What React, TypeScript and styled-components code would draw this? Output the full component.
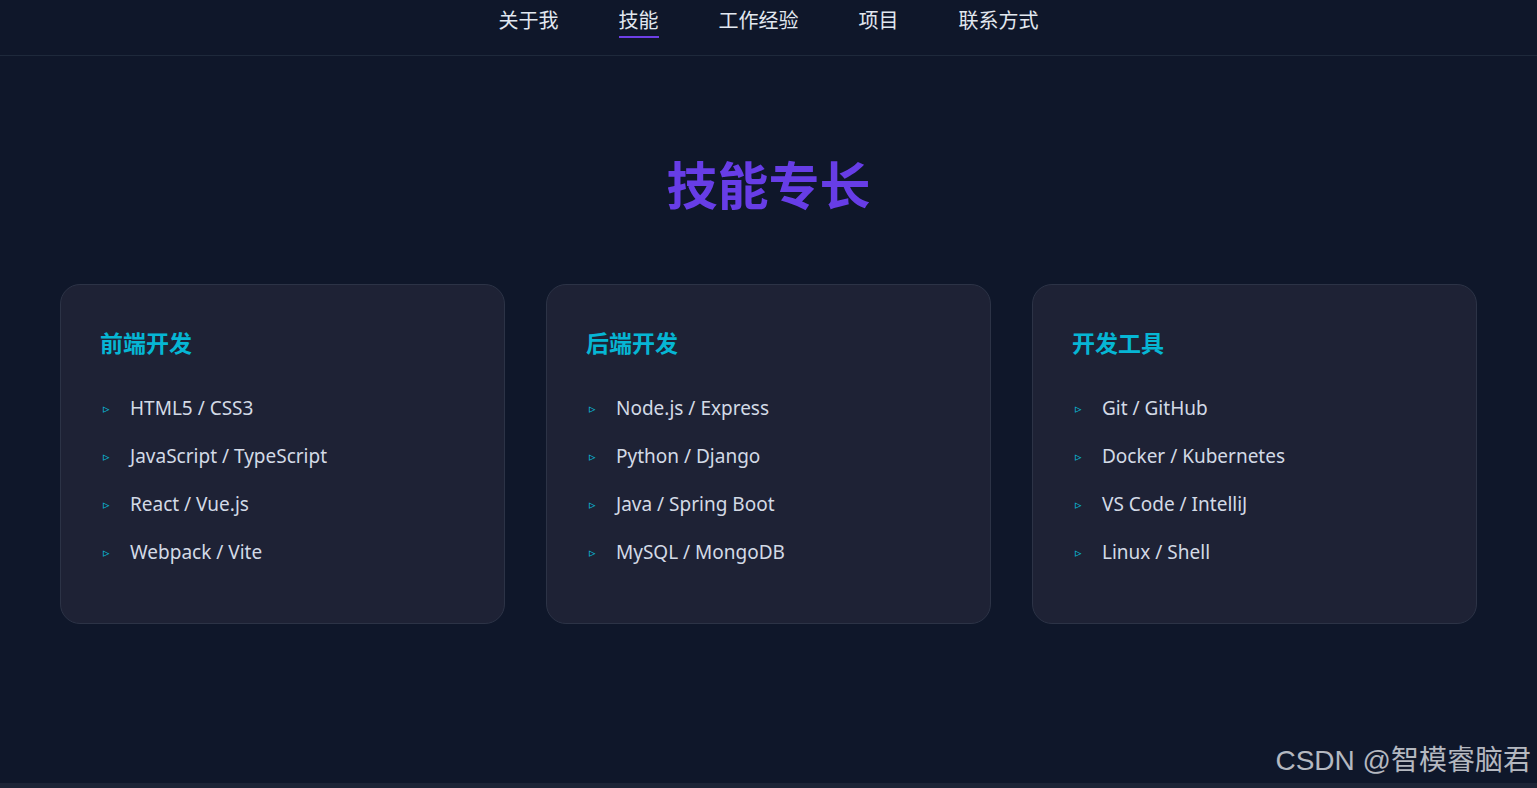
import React from 'react';
import styled, { createGlobalStyle } from 'styled-components';

const GlobalStyle = createGlobalStyle`
  html, body {
    margin: 0;
    padding: 0;
    background: #0f172a;
  }
  body {
    font-family: 'Noto Sans', 'Noto Sans CJK SC', sans-serif;
    color: #e2e8f0;
    height: 788px;
    overflow: hidden;
  }
  * {
    box-sizing: border-box;
  }
`;

const Page = styled.div`
  position: relative;
  min-height: 788px;
  background: #0f172a;
  border-bottom: 5px solid #1c2436;
`;

const NavBar = styled.nav`
  height: 56px;
  border-bottom: 1px solid #1e293b;
  display: flex;
  justify-content: center;
`;

const NavList = styled.ul`
  list-style: none;
  margin: 0;
  padding: 0;
  display: flex;
  gap: 60px;
`;

const NavItem = styled.li<{ $active?: boolean }>`
  position: relative;
  padding-top: 7px;
  height: 38px;
  font-family: 'Noto Sans CJK SC', sans-serif;
  font-size: 20px;
  line-height: 26px;
  color: #e2e8f0;
  cursor: pointer;

  &::after {
    content: '';
    position: absolute;
    left: 0;
    right: 0;
    bottom: 0;
    height: 2px;
    background: #6d3fe6;
    display: ${(p) => (p.$active ? 'block' : 'none')};
  }
`;

const Section = styled.section`
  padding: 97px 60px 0;
`;

const Title = styled.h2`
  margin: 0 0 71px;
  text-align: center;
  font-family: 'Noto Sans CJK SC', sans-serif;
  font-size: 51px;
  line-height: 60px;
  font-weight: 700;
  color: #673de6;
`;

const Grid = styled.div`
  display: grid;
  grid-template-columns: repeat(3, 1fr);
  gap: 41px;
`;

const Card = styled.div`
  height: 340px;
  padding: 37px 39px;
  background: #1e2235;
  border: 1px solid #2c3346;
  border-radius: 20px;
`;

const CardTitle = styled.h3`
  margin: 0 0 22px;
  font-family: 'Noto Sans CJK SC', sans-serif;
  font-size: 23px;
  line-height: 40px;
  font-weight: 700;
  color: #06b6d4;
`;

const SkillList = styled.ul`
  list-style: none;
  margin: 0;
  padding: 0;
`;

const Skill = styled.li`
  display: flex;
  align-items: center;
  height: 48px;
  font-size: 19px;
  color: #d3dae6;

  &::before {
    content: '▹';
    width: 27px;
    padding-left: 3px;
    font-size: 13px;
    font-weight: 700;
    color: #0bb8d8;
    font-family: 'DejaVu Sans', sans-serif;
  }
`;

const Watermark = styled.div`
  position: absolute;
  right: 6px;
  bottom: 5px;
  font-family: 'Liberation Sans', 'Noto Sans CJK SC', sans-serif;
  font-size: 28px;
  color: #b4b8c0;
`;

const navLinks = ['关于我', '技能', '工作经验', '项目', '联系方式'];

const skillGroups = [
  {
    title: '前端开发',
    items: ['HTML5 / CSS3', 'JavaScript / TypeScript', 'React / Vue.js', 'Webpack / Vite'],
  },
  {
    title: '后端开发',
    items: ['Node.js / Express', 'Python / Django', 'Java / Spring Boot', 'MySQL / MongoDB'],
  },
  {
    title: '开发工具',
    items: ['Git / GitHub', 'Docker / Kubernetes', 'VS Code / IntelliJ', 'Linux / Shell'],
  },
];

const App = () => {
  return (
    <>
      <GlobalStyle />
      <Page>
        <NavBar>
          <NavList>
            {navLinks.map((link) => (
              <NavItem key={link} $active={link === '技能'}>
                {link}
              </NavItem>
            ))}
          </NavList>
        </NavBar>

        <Section>
          <Title>技能专长</Title>
          <Grid>
            {skillGroups.map((group) => (
              <Card key={group.title}>
                <CardTitle>{group.title}</CardTitle>
                <SkillList>
                  {group.items.map((item) => (
                    <Skill key={item}>{item}</Skill>
                  ))}
                </SkillList>
              </Card>
            ))}
          </Grid>
        </Section>

        <Watermark>CSDN @智模睿脑君</Watermark>
      </Page>
    </>
  );
};

export default App;
